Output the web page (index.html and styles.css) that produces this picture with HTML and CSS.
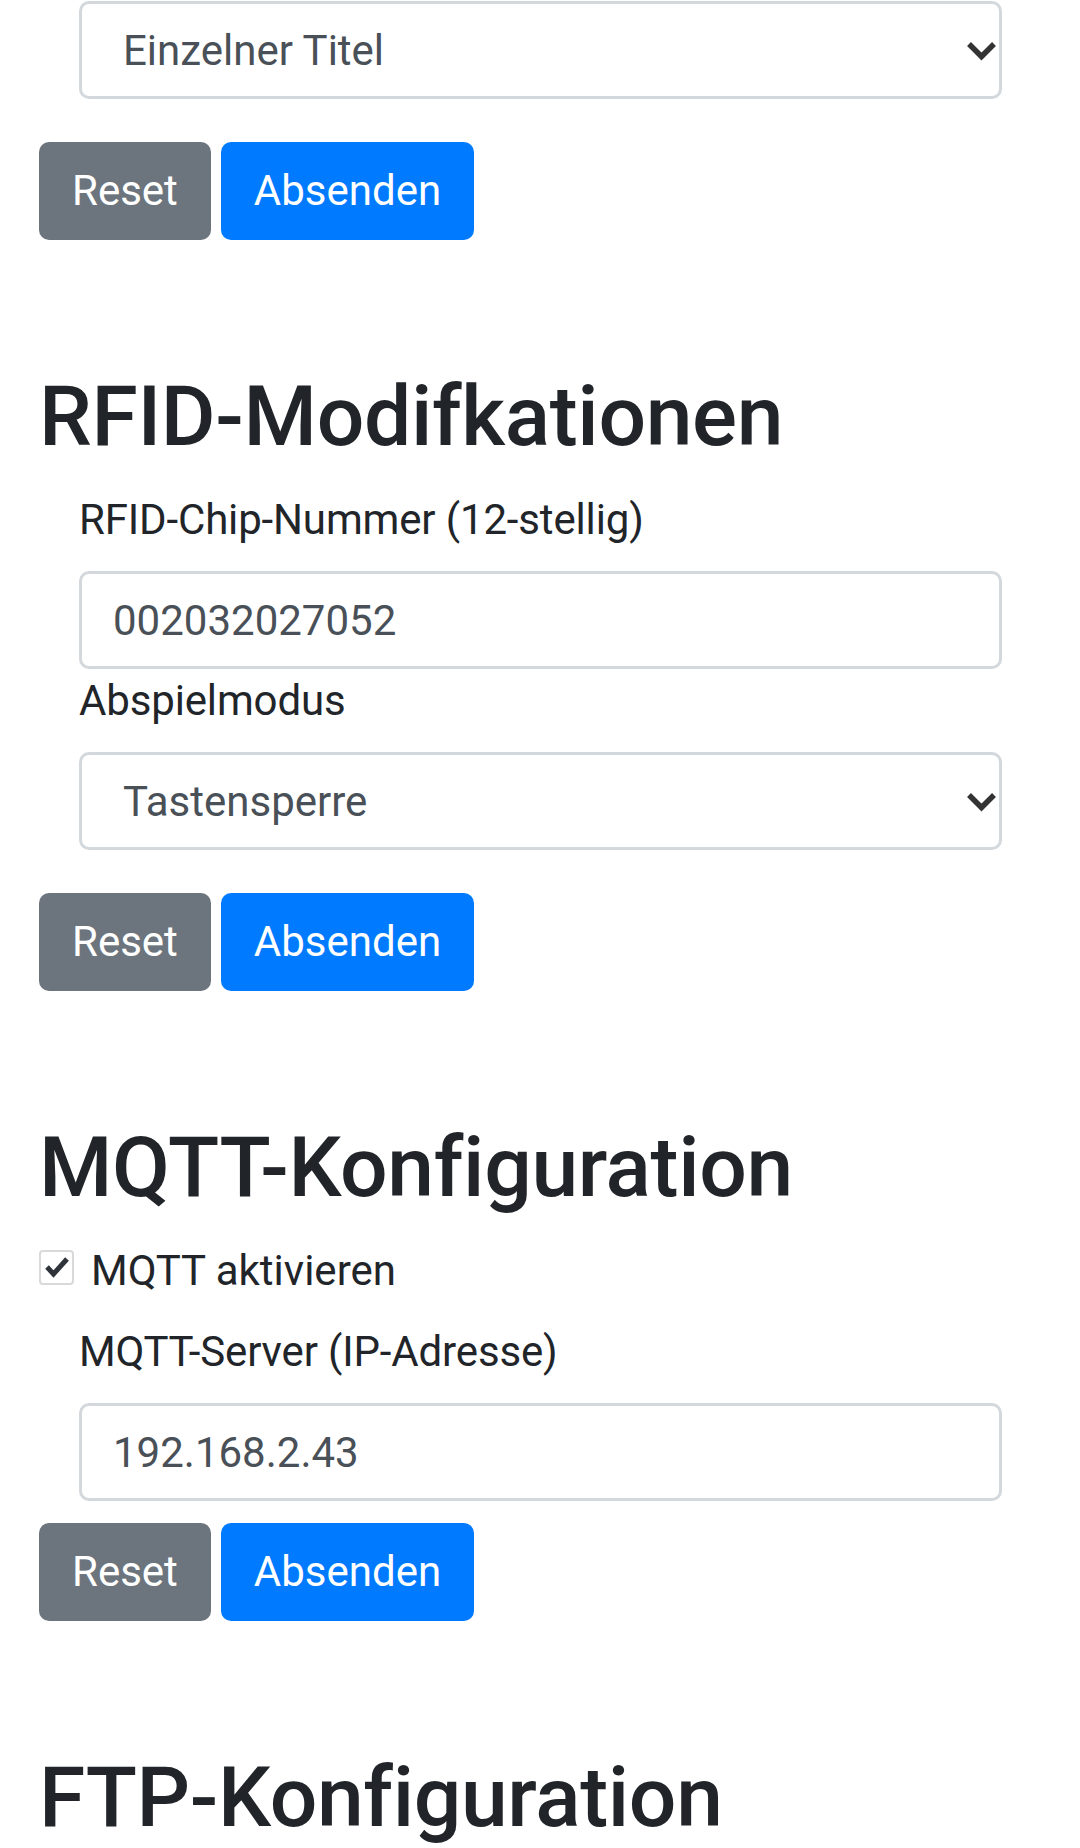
FILE: index.html
```html
<!DOCTYPE html>
<html lang="de">
<head>
<meta charset="utf-8">
<title>Konfiguration</title>
<link rel="stylesheet" href="styles.css">
</head>
<body>
<main class="page">
  <section class="block first">
    <div class="field">
      <div class="select-box"><span class="select-text">Einzelner Titel</span><svg class="chev" width="31" height="22" viewBox="0 0 31 22"><path d="M3 4 L15.5 16.5 L28 4" fill="none" stroke="#333" stroke-width="5.5"/></svg></div>
    </div>
    <div class="actions gap-select"><button class="btn btn-secondary">Reset</button> <button class="btn btn-primary">Absenden</button></div>
  </section>

  <section class="block">
    <h2 class="title">RFID-Modifkationen</h2>
    <div class="field">
      <label class="label">RFID-Chip-Nummer (12-stellig)</label>
      <div class="input-box">002032027052</div>
    </div>
    <div class="field">
      <label class="label">Abspielmodus</label>
      <div class="select-box"><span class="select-text">Tastensperre</span><svg class="chev" width="31" height="22" viewBox="0 0 31 22"><path d="M3 4 L15.5 16.5 L28 4" fill="none" stroke="#333" stroke-width="5.5"/></svg></div>
    </div>
    <div class="actions gap-select"><button class="btn btn-secondary">Reset</button> <button class="btn btn-primary">Absenden</button></div>
  </section>

  <section class="block">
    <h2 class="title">MQTT-Konfiguration</h2>
    <div class="check-row">
      <span class="checkbox"><svg width="31" height="31" viewBox="0 0 31 31"><path d="M6 15 L12.5 22 L26 7" fill="none" stroke="#2f343a" stroke-width="5"/></svg></span>
      <span class="check-label">MQTT aktivieren</span>
    </div>
    <div class="field">
      <label class="label">MQTT-Server (IP-Adresse)</label>
      <div class="input-box">192.168.2.43</div>
    </div>
    <div class="actions gap-input"><button class="btn btn-secondary">Reset</button> <button class="btn btn-primary">Absenden</button></div>
  </section>

  <section class="block">
    <h2 class="title">FTP-Konfiguration</h2>
  </section>
</main>
</body>
</html>
```

FILE: styles.css
```css
html, body {
  margin: 0;
  padding: 0;
  background: #fff;
}
body {
  font-family: Roboto, "Noto Sans", "Liberation Sans", sans-serif;
  color: #212529;
  font-size: 42px;
  line-height: 1.5;
}
.page {
  padding: 1px 39px 0 39px;
}
.block {
  margin-top: 126px;
}
.block.first {
  margin-top: 0;
}
.title {
  margin: 0 0 21px 0;
  font-size: 84px;
  font-weight: 500;
  line-height: 101px;
  color: #212529;
  letter-spacing: -0.35px;
}
.field {
  padding: 0 39px 0 40px;
}
.label {
  display: block;
  height: 63px;
  line-height: 63px;
  margin-bottom: 20px;
  color: #212529;
  letter-spacing: -0.15px;
}
.input-box,
.select-box {
  box-sizing: border-box;
  height: 98px;
  border: 3px solid #d3d8dd;
  border-radius: 10px;
  color: #495057;
  display: flex;
  align-items: center;
  background: #fff;
}
.input-box {
  padding-left: 31px;
}
.select-box {
  padding-left: 41px;
  padding-right: 2px;
  justify-content: space-between;
}
.chev {
  display: block;
  margin-top: 1px;
}
.actions {
  display: flex;
  gap: 10px;
}
.gap-select {
  margin-top: 43px;
}
.gap-input {
  margin-top: 22px;
}
.btn {
  box-sizing: border-box;
  height: 98px;
  padding: 0 33px;
  border: none;
  border-radius: 10px;
  font-family: Roboto, "Noto Sans", "Liberation Sans", sans-serif;
  font-size: 42px;
  line-height: 98px;
  color: #fff;
}
.btn-secondary {
  background: #6c757d;
}
.btn-primary {
  background: #007bff;
}
.check-row {
  display: flex;
  align-items: flex-start;
  height: 63px;
  margin-bottom: 18px;
}
.checkbox {
  box-sizing: border-box;
  width: 35px;
  height: 35px;
  border: 2px solid #d9d9d9;
  border-radius: 4px;
  display: flex;
  align-items: center;
  justify-content: center;
  margin-top: 11px;
}
.checkbox svg {
  display: block;
}
.check-label {
  margin-left: 17px;
  color: #212529;
}
```
